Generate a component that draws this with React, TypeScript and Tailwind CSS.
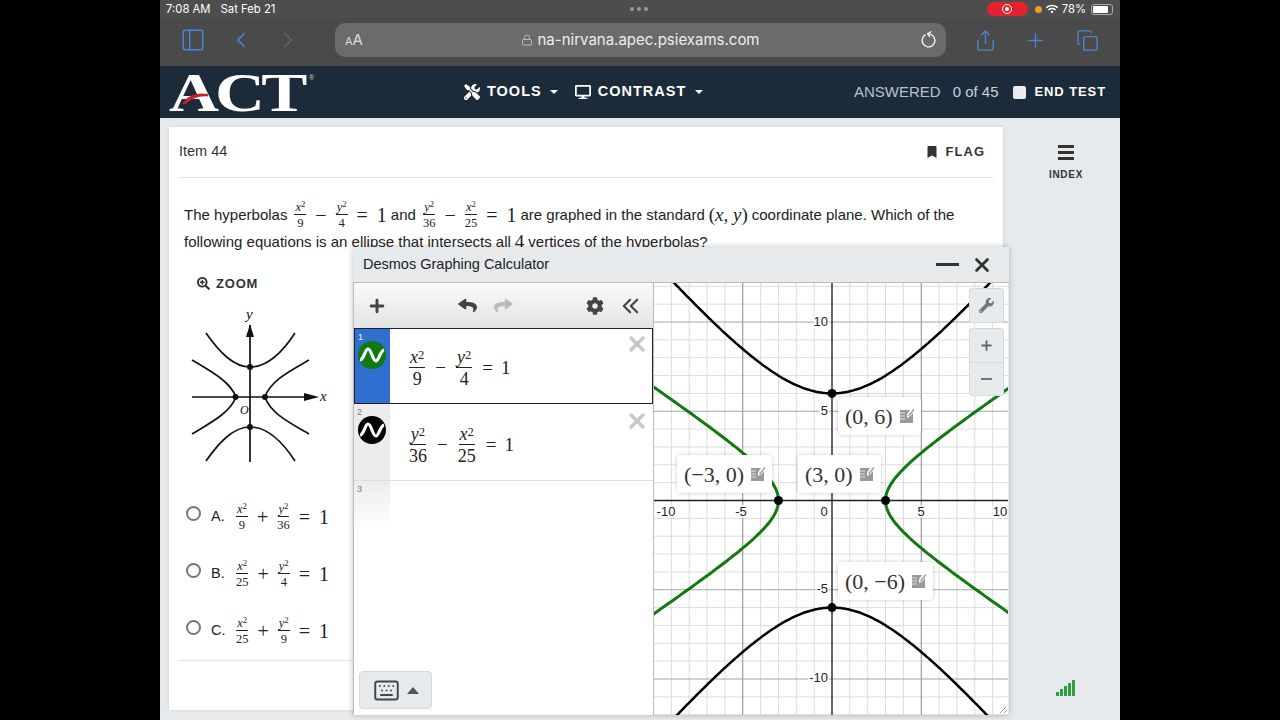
import type { ReactNode } from "react";
import { ChevronLeft, ChevronRight, Copy, Keyboard, Lock, PanelLeft, Plus, RotateCw, Share, X } from "lucide-react";
import { FaBookmark, FaCog, FaDesktop, FaReply, FaSearchPlus, FaTools, FaWifi, FaWrench } from "react-icons/fa";

const UNIT = 17.85;
const OX = 178;
const OY = 217.5;
const GW = 354;
const GH = 432;

function range(from: number, to: number) {
  const out: number[] = [];
  for (let i = from; i <= to; i++) out.push(i);
  return out;
}

// black pair, y^2/36 - x^2/25 = 1
function blackPath(sign: number) {
  const pts = range(-110, 110).map((i) => {
    const x = i / 10;
    const y = sign * 6 * Math.sqrt(1 + (x * x) / 25);
    return `${(OX + x * UNIT).toFixed(1)},${(OY - y * UNIT).toFixed(1)}`;
  });
  return "M" + pts.join("L");
}

// green pair, x^2/9 - y^2/4 = 1
function greenPath(sign: number) {
  const pts = range(-70, 70).map((i) => {
    const y = i / 10;
    const x = sign * 3 * Math.sqrt(1 + (y * y) / 4);
    return `${(OX + x * UNIT).toFixed(1)},${(OY - y * UNIT).toFixed(1)}`;
  });
  return "M" + pts.join("L");
}

function V({ v }: { v: string }) {
  return (
    <span>
      <i>{v}</i>
      <sup className="text-[0.7em] leading-none -top-[0.35em]">2</sup>
    </span>
  );
}

function Frac({ num, den, cls }: { num: ReactNode; den: ReactNode; cls: string }) {
  return (
    <span className={`inline-flex flex-col items-center align-middle leading-none ${cls}`}>
      <span className="border-b border-current px-[1px] pb-[1px]">{num}</span>
      <span className="pt-[2px]">{den}</span>
    </span>
  );
}

function Eq({ a, b, c, d, op }: { a: string; b: string; c: string; d: string; op: string }) {
  return (
    <span className="ml-[3px] inline-flex items-center gap-[9px] font-['Liberation_Serif',serif] text-[20px] text-[#222]">
      <Frac cls="text-[12.500px]" num={<V v={a} />} den={b} />
      <span>{op}</span>
      <Frac cls="text-[12.500px]" num={<V v={c} />} den={d} />
      <span>=</span>
      <span>1</span>
    </span>
  );
}

function Option({ letter, a, b, c, d }: { letter: string; a: string; b: string; c: string; d: string }) {
  return (
    <div className="flex h-[57px] items-center">
      <span className="size-[15px] -translate-y-[4px] rounded-full border-2 border-[#777] bg-white" />
      <span className="ml-[10px] w-[22px] text-[14.500px] text-[#222]">{letter}.</span>
      <Eq a={a} b={b} c={c} d={d} op="+" />
    </div>
  );
}

function DesmosEq({ a, b, c, d }: { a: string; b: string; c: string; d: string }) {
  return (
    <span className="inline-flex items-center gap-[10px] font-['Liberation_Serif',serif] text-[19px] text-[#222]">
      <Frac cls="text-[18px]" num={<V v={a} />} den={b} />
      <span>−</span>
      <Frac cls="text-[18px]" num={<V v={c} />} den={d} />
      <span>=</span>
      <span className="-ml-[2px]">1</span>
    </span>
  );
}

function WaveIcon({ bg }: { bg: string }) {
  return (
    <svg width="28" height="28" viewBox="0 0 28 28">
      <circle cx="14" cy="14" r="14" fill={bg} />
      <path d="M2 19C6 19 7 8 10 8C13.500 8 14.500 20 18 20C21 20 22 10 26 9" fill="none" stroke="white" strokeWidth="3.200" />
    </svg>
  );
}

function NoteIcon() {
  return (
    <svg width="16" height="16" viewBox="0 0 16 16" className="shrink-0">
      <path d="M1 2H11L8 6.500V10L11.500 8L14 5V15H1Z" fill="#9a9a9a" />
      <path d="M9.500 8L15 1.500" stroke="#9a9a9a" strokeWidth="1.300" />
      <path d="M1 5H6M1 8H6M1 11H6" stroke="#fff" strokeWidth="0.700" />
    </svg>
  );
}

function PointLabel({ text, cls }: { text: string; cls: string }) {
  return (
    <div className={`absolute flex h-[38px] items-center gap-[6px] rounded-[4px] bg-white pl-[7px] pr-[6px] shadow-[0_0_4px_rgba(0,0,0,0.2)] font-['Liberation_Serif',serif] text-[22px] text-[#333] ${cls}`}>
      <span className="whitespace-nowrap">{text}</span>
      <NoteIcon />
    </div>
  );
}

function GraphLines() {
  const xs = range(-9, 10);
  const ys = range(-12, 12);
  const tick = "fill-[#222] text-[13px] font-['Liberation_Sans',sans-serif]";
  return (
    <svg width={GW} height={GH} viewBox={`0 0 ${GW} ${GH}`} className="block">
      {xs.filter((n) => n % 5 !== 0).map((n) => (
        <line key={n} x1={OX + n * UNIT} x2={OX + n * UNIT} y1={0} y2={GH} stroke="#dcdcdc" />
      ))}
      {ys.filter((n) => n % 5 !== 0).map((n) => (
        <line key={n} y1={OY + n * UNIT} y2={OY + n * UNIT} x1={0} x2={GW} stroke="#dcdcdc" />
      ))}
      {[-5, 5].map((n) => (
        <line key={n} x1={OX + n * UNIT} x2={OX + n * UNIT} y1={0} y2={GH} stroke="#8a8a8a" />
      ))}
      {[-10, -5, 5, 10].map((n) => (
        <line key={n} y1={OY + n * UNIT} y2={OY + n * UNIT} x1={0} x2={GW} stroke="#a5a5a5" />
      ))}
      <line x1={OX} x2={OX} y1={0} y2={GH} stroke="#333" strokeWidth="1.500" />
      <line y1={OY} y2={OY} x1={0} x2={GW} stroke="#222" strokeWidth="1.500" />
      <path d={greenPath(1)} fill="none" stroke="#0f7a0f" strokeWidth="3" />
      <path d={greenPath(-1)} fill="none" stroke="#0f7a0f" strokeWidth="3" />
      <path d={blackPath(1)} fill="none" stroke="#000" strokeWidth="2.500" />
      <path d={blackPath(-1)} fill="none" stroke="#000" strokeWidth="2.500" />
      <circle cx={OX} cy={OY - 6 * UNIT} r="4.500" fill="#000" />
      <circle cx={OX} cy={OY + 6 * UNIT} r="4.500" fill="#000" />
      <circle cx={OX - 3 * UNIT} cy={OY} r="4.500" fill="#000" />
      <circle cx={OX + 3 * UNIT} cy={OY} r="4.500" fill="#000" />
      <g className={tick} stroke="#fff" strokeWidth="3" paintOrder="stroke">
        <text x="12" y="233" textAnchor="middle">-10</text>
        <text x="87" y="233" textAnchor="middle">-5</text>
        <text x="170" y="233" textAnchor="middle">0</text>
        <text x="267" y="233" textAnchor="middle">5</text>
        <text x="346" y="233" textAnchor="middle">10</text>
        <text x="174" y="43" textAnchor="end">10</text>
        <text x="174" y="132" textAnchor="end">5</text>
        <text x="174" y="310" textAnchor="end">-5</text>
        <text x="174" y="399" textAnchor="end">-10</text>
      </g>
      <path d="M346 430L352 424M350 430L353 427" stroke="#999" />
    </svg>
  );
}

function SmallGraph() {
  return (
    <svg width="140" height="160" viewBox="0 0 140 160" className="block">
      <g fill="none" stroke="#111" strokeWidth="1.700">
        <path d="M2 92H122" />
        <path d="M60 20V157" />
        <path d="M16 28C30 48 44 62 60 62C76 62 92 48 105 28" />
        <path d="M16 156C30 136 44 122 60 122C76 122 92 136 105 156" />
        <path d="M2 55C20 66 40 76 46 92C40 108 20 118 2 129" />
        <path d="M119 55C100 66 80 76 75 92C80 108 100 118 119 129" />
      </g>
      <path d="M60 19L64 32H56Z M129 92L114 88V96Z" fill="#111" />
      <g fill="#111">
        <circle cx="60" cy="62" r="3" />
        <circle cx="60" cy="122" r="3" />
        <circle cx="45.500" cy="92" r="3" />
        <circle cx="75" cy="92" r="3" />
      </g>
      <g className="fill-[#111] font-['Liberation_Serif',serif] text-[15px] italic">
        <text x="56" y="14">y</text>
        <text x="130" y="96">x</text>
        <text x="50" y="109" className="text-[12px]">O</text>
      </g>
    </svg>
  );
}

function Desmos() {
  return (
    <div className="absolute left-[193px] top-[247px] flex h-[468px] w-[656px] flex-col bg-[#e6eaec] shadow-[0_0_6px_rgba(0,0,0,0.25)]">
      <div className="flex h-[35px] shrink-0 items-center justify-between pl-[10px] pr-[16px]">
        <span className="text-[14.500px] text-[#222]">Desmos Graphing Calculator</span>
        <span className="flex items-center gap-[12px] text-[#333]">
          <span className="h-[3px] w-[23px] bg-[#333]" />
          <X size={22} strokeWidth={3} />
        </span>
      </div>
      <div className="flex min-h-0 flex-1 border-l border-t border-[#bbb] pr-[1px]">
        <div className="relative flex w-[300px] shrink-0 flex-col border-r border-[#bbb] bg-white">
          <div className="flex h-[45px] shrink-0 items-center bg-gradient-to-b from-[#fafafa] to-[#e4e4e4] pl-[13px] text-[#444]">
            <Plus size={20} strokeWidth={3.500} />
            <FaReply size={19} className="ml-[71px] scale-y-[0.8]" />
            <FaReply size={19} className="ml-[17px] -scale-x-100 scale-y-[0.8] text-[#bcbcbc]" />
            <FaCog size={18} className="ml-[73px]" />
            <ChevronLeft size={14} strokeWidth={2} className="ml-[16px] scale-[1.800]" />
            <ChevronLeft size={14} strokeWidth={2} className="-ml-[7px] scale-[1.800]" />
          </div>
          <div className="flex h-[76px] shrink-0 border border-[#222]">
            <div className="relative w-[35px] shrink-0 bg-[#2f6fd0] pt-[12px] pl-[3px]">
              <span className="absolute left-[3px] top-[2px] text-[9px] text-white">1</span>
              <WaveIcon bg="#0f7a0f" />
            </div>
            <div className="flex flex-1 items-center pl-[19px] pt-[4px]">
              <DesmosEq a="x" b="9" c="y" d="4" />
            </div>
            <X size={24} strokeWidth={3.500} className="mr-[3px] mt-[3px] text-[#c8c8c8]" />
          </div>
          <div className="flex h-[77px] shrink-0 border-b border-[#ddd]">
            <div className="relative w-[36px] shrink-0 bg-[#ececec] pl-[4px] pt-[12px]">
              <span className="absolute left-[3px] top-[2px] text-[9px] text-[#777]">2</span>
              <WaveIcon bg="#000" />
            </div>
            <div className="flex flex-1 items-center pl-[19px] pt-[6px]">
              <DesmosEq a="y" b="36" c="x" d="25" />
            </div>
            <X size={24} strokeWidth={3.500} className="mr-[4px] mt-[5px] text-[#c8c8c8]" />
          </div>
          <div className="relative h-[48px] w-[36px] bg-gradient-to-b from-[#ececec] to-white">
            <span className="absolute left-[3px] top-[2px] text-[9px] text-[#777]">3</span>
          </div>
          <button className="absolute bottom-[6px] left-[5px] flex h-[38px] w-[73px] items-center justify-center gap-[7px] rounded-[4px] border border-[#d5d9db] bg-[#e6eaec] text-[#444]">
            <Keyboard size={27} strokeWidth={1.700} />
            <span className="h-0 w-0 border-x-[6px] border-b-[7px] border-x-transparent border-b-[#555]" />
          </button>
        </div>
        <div className="relative flex-1 overflow-hidden bg-white">
          <GraphLines />
          <div className="absolute left-[315px] top-[5px] flex size-[35px] items-center justify-center rounded-[3px] border border-[#d5d9db] bg-[#e8ebed] text-[#777]">
            <FaWrench size={15} />
          </div>
          <div className="absolute left-[315px] top-[45px] flex h-[68px] w-[35px] flex-col rounded-[3px] border border-[#d5d9db] bg-[#e8ebed] text-[#666]">
            <span className="flex flex-1 items-center justify-center border-b border-[#d5d9db]">
              <Plus size={15} strokeWidth={3} />
            </span>
            <span className="flex flex-1 items-center justify-center">
              <span className="h-[2.500px] w-[11px] bg-[#777]" />
            </span>
          </div>
          <PointLabel text="(0, 6)" cls="left-[184px] top-[114px]" />
          <PointLabel text="(−3, 0)" cls="left-[23px] top-[172px]" />
          <PointLabel text="(3, 0)" cls="left-[144px] top-[172px]" />
          <PointLabel text="(0, −6)" cls="left-[184px] top-[279px]" />
        </div>
      </div>
    </div>
  );
}

export default function App() {
  return (
    <div className="flex h-[720px] w-[1280px] justify-center overflow-hidden bg-black font-['Liberation_Sans',Arial,sans-serif]">
      <div className="relative flex h-full w-[960px] flex-col bg-[#e6eaec]">
        <div className="relative flex h-[18px] shrink-0 items-center justify-between bg-[#4d4d4d] pl-[6px] pr-[7px] text-[11.300px] text-white font-['Inter',sans-serif]">
          <span className="flex gap-[10px]">
            <span>7:08 AM</span>
            <span>Sat Feb 21</span>
          </span>
          <span className="absolute left-[470px] flex gap-[3px]">
            <span className="size-[4px] rounded-full bg-[#999]" />
            <span className="size-[4px] rounded-full bg-[#999]" />
            <span className="size-[4px] rounded-full bg-[#999]" />
          </span>
          <span className="flex items-center">
            <span className="flex h-[14px] w-[41px] items-center justify-center rounded-[7px] bg-[#e3222e]">
              <span className="flex size-[10px] items-center justify-center rounded-full border border-white">
                <span className="size-[4px] rounded-full bg-white" />
              </span>
            </span>
            <span className="ml-[7px] size-[7px] rounded-full bg-[#f09a28]" />
            <FaWifi size={12} className="ml-[4px]" />
            <span className="ml-[4px]">78%</span>
            <span className="ml-[5px] flex h-[11px] w-[22px] rounded-[3px] border border-[#aaa] p-[1px]">
              <span className="h-full w-[15px] rounded-[1px] bg-white" />
            </span>
          </span>
        </div>

        <div className="flex h-[48px] shrink-0 items-center bg-[#4a4a4a] pb-[4px] text-[#4a86cf]">
          <PanelLeft size={26} strokeWidth={1.300} className="ml-[20px]" />
          <ChevronLeft size={26} strokeWidth={1.500} className="ml-[22px]" />
          <ChevronRight size={26} strokeWidth={1.500} className="ml-[21px] text-[#666]" />
          <div className="relative ml-[34px] flex h-[34px] w-[611px] items-center justify-center rounded-[10px] bg-[#6b6b6b] text-[15px] text-[#eee] font-['Inter',sans-serif]">
            <span className="absolute left-[10px] text-[#ddd]">
              <span className="text-[11px]">A</span>A
            </span>
            <Lock size={12} className="mr-[4px] text-[#bbb]" />
            <span>na-nirvana.apec.psiexams.com</span>
            <RotateCw size={17} className="absolute right-[9px] -scale-x-100 rotate-[60deg] text-[#eee]" />
          </div>
          <Share size={23} strokeWidth={1.400} className="ml-[28px]" />
          <Plus size={23} strokeWidth={1.400} className="ml-[27px]" />
          <Copy size={23} strokeWidth={1.400} className="ml-[29px]" />
        </div>

        <div className="relative flex h-[52px] shrink-0 items-center bg-[#1b2b3a] text-white">
          <div className="relative ml-[8px] h-[52px] w-[150px] shrink-0">
            <span className="absolute left-[1px] top-[-3px] origin-left scale-x-[1.280] font-['Liberation_Serif',serif] text-[54px] font-bold leading-[60px] tracking-[-3px] text-white">
              ACT
            </span>
            <svg width="28" height="13" viewBox="0 0 28 13" className="absolute left-[13px] top-[26px]">
              <path d="M1 12C6 4 15 0 27 2V4.500C18 3.500 10 7 5 12Z" fill="#c8202f" />
            </svg>
            <span className="absolute left-[141px] top-[7px] text-[7px] text-[#ccc]">®</span>
          </div>
          <div className="ml-[146px] flex items-center text-[14.500px] font-bold tracking-[1px]">
            <FaTools size={16} />
            <span className="ml-[7px]">TOOLS</span>
            <span className="ml-[8px] h-0 w-0 border-x-[4px] border-t-[4px] border-x-transparent border-t-white" />
            <FaDesktop size={16} className="ml-[17px]" />
            <span className="ml-[7px]">CONTRAST</span>
            <span className="ml-[9px] h-0 w-0 border-x-[4px] border-t-[4px] border-x-transparent border-t-white" />
          </div>
          <div className="ml-auto flex items-center pr-[14px]">
            <span className="text-[15px] text-[#b9c2ca]">ANSWERED</span>
            <span className="ml-[12px] text-[15px] text-[#c9d0d6]">0 of 45</span>
            <span className="ml-[14px] size-[13px] rounded-[2px] bg-[#e8ecef]" />
            <span className="ml-[9px] text-[13px] font-bold tracking-[0.900px]">END TEST</span>
          </div>
        </div>

        <div className="flex min-h-0 flex-1">
          <div className="ml-[9px] mt-[9px] h-[583px] w-[834px] bg-white shadow-[0_0_3px_rgba(0,0,0,0.12)]">
            <div className="mx-[10px] flex h-[51px] items-center justify-between border-b border-[#dde3e3] pr-[8px]">
              <span className="text-[14.500px] text-[#333]">Item 44</span>
              <span className="flex items-center gap-[8px] text-[13px] font-bold tracking-[1px] text-[#333]">
                <FaBookmark size={12} />
                FLAG
              </span>
            </div>
            <div className="pl-[15px] pt-[22px] text-[15px] text-[#222]">
              <div className="flex h-[30px] items-center gap-[4px] whitespace-nowrap">
                <span>The hyperbolas</span>
                <Eq a="x" b="9" c="y" d="4" op="−" />
                <span>and</span>
                <Eq a="y" b="36" c="x" d="25" op="−" />
                <span>are graphed in the standard</span>
                <span className="font-['Liberation_Serif',serif] text-[19px]">
                  (<i>x</i>, <i>y</i>)
                </span>
                <span>coordinate plane. Which of the</span>
              </div>
              <div className="flex h-[24px] items-center gap-[4px] whitespace-nowrap">
                <span>following equations is an ellipse that intersects all</span>
                <span className="font-['Liberation_Serif',serif] text-[19px]">4</span>
                <span>vertices of the hyperbolas?</span>
              </div>
            </div>
            <div className="mt-[20px] flex items-center gap-[6px] pl-[28px] text-[13px] font-bold tracking-[0.800px] text-[#333]">
              <FaSearchPlus size={13} />
              ZOOM
            </div>
            <div className="mt-[11px] pl-[21px]">
              <SmallGraph />
            </div>
            <div className="mt-[24px] pl-[17px]">
              <Option letter="A" a="x" b="9" c="y" d="36" />
              <Option letter="B" a="x" b="25" c="y" d="4" />
              <Option letter="C" a="x" b="25" c="y" d="9" />
            </div>
            <div className="mx-[10px] border-b border-[#dde3e3]" />
          </div>
          <div className="relative flex-1">
            <div className="absolute left-[40px] top-[27px] flex w-[46px] flex-col items-center text-[#333]">
              <span className="h-[3px] w-[16px] bg-[#333]" />
              <span className="mt-[3px] h-[3px] w-[16px] bg-[#333]" />
              <span className="mt-[3px] h-[3px] w-[16px] bg-[#333]" />
              <span className="mt-[7px] text-[10px] font-bold tracking-[0.700px]">INDEX</span>
            </div>
            <div className="absolute bottom-[24px] left-[53px] flex items-end gap-[1.500px]">
              <span className="h-[4px] w-[2.500px] bg-[#2e9e3e]" />
              <span className="h-[7px] w-[2.500px] bg-[#2e9e3e]" />
              <span className="h-[10px] w-[2.500px] bg-[#2e9e3e]" />
              <span className="h-[13px] w-[2.500px] bg-[#2e9e3e]" />
              <span className="h-[16px] w-[2.500px] bg-[#2e9e3e]" />
            </div>
          </div>
        </div>

        <Desmos />
      </div>
    </div>
  );
}
